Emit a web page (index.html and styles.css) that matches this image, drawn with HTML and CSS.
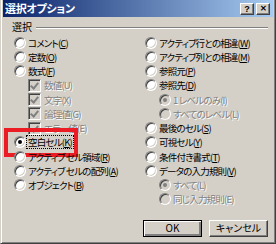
FILE: index.html
```html
<!DOCTYPE html>
<html lang="ja">
<head>
<meta charset="UTF-8">
<title>選択オプション</title>
<link rel="stylesheet" href="styles.css">
</head>
<body>
<div class="window">
    <div class="titlebar">
        <span class="title">選択オプション</span>
        <div class="caps">
            <span class="cap">?</span>
            <span class="cap cap-close">✕</span>
        </div>
    </div>
    <div class="content">
        <div class="group">
            <span class="legend">選択</span>
            <span class="rule"></span>
        </div>
        <div class="columns">
            <div class="col col-left">
                <div class="row"><span class="radio"></span><span class="label">コメント(<u>C</u>)</span></div>
                <div class="row"><span class="radio"></span><span class="label">定数(<u>O</u>)</span></div>
                <div class="row"><span class="radio"></span><span class="label">数式(<u>F</u>)</span></div>
                <div class="row sub disabled"><span class="check on"></span><span class="label">数値(U)</span></div>
                <div class="row sub disabled"><span class="check on"></span><span class="label">文字(X)</span></div>
                <div class="row sub disabled"><span class="check on"></span><span class="label">論理値(G)</span></div>
                <div class="row sub disabled"><span class="check on"></span><span class="label">エラー値(E)</span></div>
                <div class="row marked"><span class="radio on"></span><span class="label focus">空白セル(<u>K</u>)</span></div>
                <div class="row"><span class="radio"></span><span class="label">アクティブ セル領域(<u>R</u>)</span></div>
                <div class="row"><span class="radio"></span><span class="label">アクティブ セルの配列(<u>A</u>)</span></div>
                <div class="row"><span class="radio"></span><span class="label">オブジェクト(<u>B</u>)</span></div>
            </div>
            <div class="col col-right">
                <div class="row"><span class="radio"></span><span class="label">アクティブ行との相違(<u>W</u>)</span></div>
                <div class="row"><span class="radio"></span><span class="label">アクティブ列との相違(<u>M</u>)</span></div>
                <div class="row"><span class="radio"></span><span class="label">参照元(<u>P</u>)</span></div>
                <div class="row"><span class="radio"></span><span class="label">参照先(<u>D</u>)</span></div>
                <div class="row sub disabled"><span class="radio on"></span><span class="label">1 レベルのみ(I)</span></div>
                <div class="row sub disabled"><span class="radio"></span><span class="label">すべてのレベル(L)</span></div>
                <div class="row"><span class="radio"></span><span class="label">最後のセル(<u>S</u>)</span></div>
                <div class="row"><span class="radio"></span><span class="label">可視セル(<u>Y</u>)</span></div>
                <div class="row"><span class="radio"></span><span class="label">条件付き書式(<u>T</u>)</span></div>
                <div class="row"><span class="radio"></span><span class="label">データの入力規則(<u>V</u>)</span></div>
                <div class="row sub disabled"><span class="radio on"></span><span class="label">すべて(L)</span></div>
                <div class="row sub disabled"><span class="radio"></span><span class="label">同じ入力規則(E)</span></div>
            </div>
        </div>
        <div class="buttons">
            <button class="btn btn-default">OK</button>
            <button class="btn">キャンセル</button>
        </div>
    </div>
</div>
</body>
</html>
```

FILE: styles.css
```css
body {
    margin: 0;
    font-family: "Noto Sans CJK JP", "Liberation Sans", sans-serif;
    font-size: 10px;
    font-feature-settings: "palt";
}
.window {
    width: 276px;
    height: 244px;
    box-sizing: border-box;
    background: #d4d0c8;
    border-left: 1px solid #d4d0c8;
    border-right: 1px solid #404040;
    border-bottom: 1px solid #404040;
    box-shadow: inset 1px 0 0 #fff, inset -1px -1px 0 #808080;
    padding: 0 2px 0 2px;
    display: flex;
    flex-direction: column;
    overflow: hidden;
}
.titlebar {
    height: 17px;
    display: flex;
    align-items: center;
    justify-content: space-between;
    padding: 0 3px 0 2px;
    background: linear-gradient(to right, #0a246a, #a6caf0);
}
.title {
    color: #fff;
    font-weight: bold;
    font-size: 11px;
    line-height: 17px;
    letter-spacing: -0.3px;
}
.caps {
    display: flex;
    gap: 2px;
}
.cap {
    width: 14px;
    height: 12px;
    box-sizing: border-box;
    background: #d4d0c8;
    border: 1px solid;
    border-color: #fff #404040 #404040 #fff;
    box-shadow: inset -1px -1px 0 #808080;
    font-family: "Liberation Sans", sans-serif;
    font-weight: bold;
    font-size: 9px;
    line-height: 10px;
    text-align: center;
    color: #000;
}
.cap-close {
    font-size: 8px;
}
.content {
    flex: 1;
    display: flex;
    flex-direction: column;
    padding: 3px 5px 0 6px;
}
.group {
    display: flex;
    align-items: center;
    height: 14px;
    padding-left: 3px;
}
.legend {
    line-height: 14px;
    margin-right: 4px;
}
.rule {
    flex: 1;
    height: 0;
    border-top: 1px solid #808080;
    border-bottom: 1px solid #fff;
    margin-top: 1px;
}
.columns {
    display: flex;
    margin-top: 1.6px;
}
.col-left {
    width: 131px;
    padding-left: 5px;
}
.row {
    height: 14.25px;
    display: flex;
    align-items: center;
    position: relative;
}
.row.sub {
    padding-left: 14px;
}
.label {
    font-size: 9.5px;
    line-height: 12px;
    white-space: nowrap;
    padding: 0 1px;
    letter-spacing: -0.8px;
}
.disabled .label {
    color: #808080;
    text-shadow: 1px 1px 0 #fff;
}
.label.focus {
    outline: 1px dotted #000;
    outline-offset: 0;
}
.radio {
    width: 12px;
    height: 12px;
    box-sizing: border-box;
    border-radius: 50%;
    border: 1px solid;
    border-color: #808080 #fff #fff #808080;
    box-shadow: inset 1px 1px 0 #404040, inset -1px -1px 0 #d4d0c8;
    background: #fff;
    margin-right: 1px;
    flex-shrink: 0;
    position: relative;
}
.disabled .radio {
    background: #d4d0c8;
}
.radio.on::after {
    content: "";
    position: absolute;
    left: 3px;
    top: 3px;
    width: 4px;
    height: 4px;
    border-radius: 50%;
    background: #000;
}
.disabled .radio.on::after {
    background: #808080;
}
.check {
    width: 13px;
    height: 13px;
    box-sizing: border-box;
    border: 1px solid;
    border-color: #808080 #fff #fff #808080;
    box-shadow: inset 1px 1px 0 #404040, inset -1px -1px 0 #d4d0c8;
    background: #d4d0c8;
    margin-right: 2px;
    flex-shrink: 0;
    position: relative;
}
.check.on::after {
    content: "";
    position: absolute;
    left: 3px;
    top: 1px;
    width: 3px;
    height: 6px;
    border: solid #808080;
    border-width: 0 2px 2px 0;
    transform: rotate(40deg);
}
.marked::after {
    content: "";
    position: absolute;
    left: -10px;
    top: -7px;
    width: 74px;
    height: 29px;
    box-sizing: border-box;
    border: 4px solid #ec1c24;
}
.buttons {
    display: flex;
    justify-content: flex-end;
    gap: 7px;
    margin-top: 13px;
}
.btn {
    width: 59px;
    height: 17px;
    box-sizing: border-box;
    padding: 0;
    background: #d4d0c8;
    border: 1px solid;
    border-color: #fff #404040 #404040 #fff;
    box-shadow: inset -1px -1px 0 #808080;
    font-family: "Noto Sans CJK JP", "Liberation Sans", sans-serif;
    font-feature-settings: "palt";
    font-size: 10px;
    line-height: 14px;
    color: #000;
}
.btn-default {
    border: 1px solid #000;
    box-shadow: inset 1px 1px 0 #fff, inset -2px -2px 0 #808080, inset -1px -1px 0 #404040;
}
```
